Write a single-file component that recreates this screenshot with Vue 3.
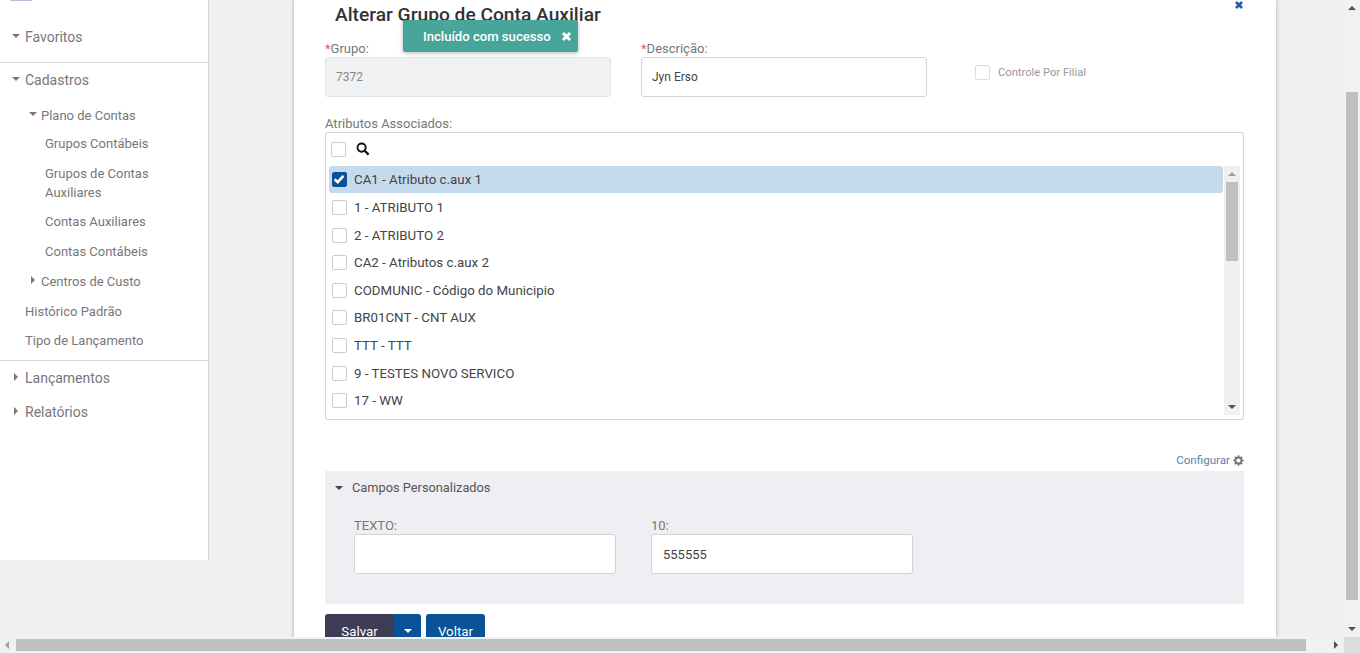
<script setup>
const attrs = [
  { label: "CA1 - Atributo c.aux 1", on: true },
  { label: "1 - ATRIBUTO 1" },
  { label: "2 - ATRIBUTO 2" },
  { label: "CA2 - Atributos c.aux 2" },
  { label: "CODMUNIC - Código do Municipio" },
  { label: "BR01CNT - CNT AUX" },
  { label: "TTT - TTT" },
  { label: "9 - TESTES NOVO SERVICO" },
  { label: "17 - WW" }
]
</script>

<template>
  <div class="page">
    <aside class="sidebar">
      <div class="logo-edge"></div>
      <div class="menu-group first">
        <div class="top-item h50"><span class="tri down"></span>Favoritos</div>
      </div>
      <div class="menu-group second">
        <div class="top-item"><span class="tri down"></span>Cadastros</div>
        <div class="sub-item head"><span class="tri down small"></span>Plano de Contas</div>
        <div class="leaf">Grupos Contábeis</div>
        <div class="leaf two">Grupos de Contas<br />Auxiliares</div>
        <div class="leaf">Contas Auxiliares</div>
        <div class="leaf">Contas Contábeis</div>
        <div class="sub-item"><span class="tri right small"></span>Centros de Custo</div>
        <div class="plain">Histórico Padrão</div>
        <div class="plain last">Tipo de Lançamento</div>
      </div>
      <div class="menu-group third">
        <div class="top-item"><span class="tri right"></span>Lançamentos</div>
        <div class="top-item"><span class="tri right"></span>Relatórios</div>
      </div>
    </aside>

    <main class="modal">
      <div class="title-row">
        <h1>Alterar Grupo de Conta Auxiliar</h1>
        <svg class="close" viewBox="0 0 10 10" width="10" height="10">
          <path d="M2 2 8 8M8 2 2 8" stroke="#1f5ca6" stroke-width="2.6" fill="none" />
        </svg>
      </div>

      <div class="toast">
        <span>Incluído com sucesso</span>
        <svg viewBox="0 0 10 10" width="11" height="11">
          <path d="M1.8 1.8 8.2 8.2M8.2 1.8 1.8 8.2" stroke="#fff" stroke-width="2.7" fill="none" />
        </svg>
      </div>

      <div class="form-row">
        <div class="field">
          <label><i>*</i>Grupo:</label>
          <div class="input disabled">7372</div>
        </div>
        <div class="field">
          <label><i>*</i>Descrição:</label>
          <div class="input">Jyn Erso</div>
        </div>
        <div class="filial">
          <span class="check light"></span>
          <span>Controle Por Filial</span>
        </div>
      </div>

      <div class="assoc-label">Atributos Associados:</div>
      <div class="assoc">
        <div class="assoc-head">
          <span class="check"></span>
          <svg viewBox="0 0 14 14" width="14" height="14">
            <circle cx="5.6" cy="5.6" r="4.1" fill="none" stroke="#111" stroke-width="1.9" />
            <path d="M8.7 8.7 12.6 12.6" stroke="#111" stroke-width="2.3" />
          </svg>
        </div>
        <div class="assoc-body">
          <ul class="attr-list">
            <li v-for="a in attrs" :key="a.label" :class="{ selected: a.on }">
              <span class="check" :class="{ checked: a.on }">
                <svg v-if="a.on" viewBox="0 0 14 14" width="14" height="14">
                  <path d="M2.6 7.2 5.7 10.2 11.4 3.8" fill="none" stroke="#fff" stroke-width="2.6" />
                </svg>
              </span>
              {{ a.label }}
            </li>
          </ul>
          <div class="list-scroll">
            <span class="arrow up grey"></span>
            <div class="list-thumb"></div>
            <span class="arrow down-a dark"></span>
          </div>
        </div>
      </div>

      <div class="config">
        Configurar
        <svg viewBox="0 0 12 12" width="11" height="11">
          <circle cx="6" cy="6" r="3.4" fill="none" stroke="#6f7784" stroke-width="2.2" />
          <path d="M6 .4V2.4M6 9.6V11.6M.4 6H2.4M9.6 6H11.6M2 2 3.4 3.4M8.6 8.6 10 10M10 2 8.6 3.4M3.4 8.6 2 10" stroke="#6f7784" stroke-width="1.7" />
        </svg>
      </div>

      <section class="custom">
        <div class="custom-head"><span class="tri down dark"></span>Campos Personalizados</div>
        <div class="custom-row">
          <div class="field wide">
            <label>TEXTO:</label>
            <div class="input"></div>
          </div>
          <div class="field wide">
            <label>10:</label>
            <div class="input mono">555555</div>
          </div>
        </div>
      </section>

      <div class="actions">
        <button class="btn save">Salvar</button>
        <button class="btn caret"><span class="tri down white"></span></button>
        <button class="btn back">Voltar</button>
      </div>
    </main>

    <!-- barras de rolagem da janela -->
    <div class="vbar">
      <span class="arrow up dark"></span>
      <div class="vthumb"></div>
      <span class="arrow down-a dark"></span>
    </div>
    <div class="hbar">
      <span class="arrow left-a grey"></span>
      <div class="hthumb"></div>
      <span class="arrow right-a dark"></span>
    </div>
    <div class="corner"></div>
  </div>
</template>

<style>
html,
body {
  margin: 0;
  overflow: hidden;
}
</style>

<style scoped>
.page {
  position: relative;
  display: flex;
  align-items: flex-start;
  width: 1360px;
  height: 653px;
  overflow: hidden;
  background: #f0f0f2;
  font-family: Roboto, "Liberation Sans", sans-serif;
  color: #444;
}

/* menu lateral */
.sidebar {
  position: relative;
  flex: none;
  width: 208px;
  height: 560px;
  background: #fff;
  border-right: 1px solid #d6d6d6;
  color: #777;
}

.logo-edge {
  position: absolute;
  left: 10px;
  top: 0;
  width: 22px;
  height: 1px;
  background: #b9bde0;
}

.menu-group.first {
  padding-top: 12px;
  border-bottom: 1px solid #d8d8d8;
}

.menu-group.second {
  padding-bottom: 5px;
  border-bottom: 1px solid #d8d8d8;
}

.top-item {
  display: flex;
  align-items: center;
  height: 34px;
  font-size: 14px;
  padding-left: 12px;
}

.top-item.h50 {
  height: 50px;
}

.tri {
  display: inline-block;
  width: 0;
  height: 0;
  margin-right: 5px;
}

.tri.down {
  border-left: 4px solid transparent;
  border-right: 4px solid transparent;
  border-top: 4px solid #777;
  margin-top: -2px;
}

.tri.right {
  margin-left: 2px;
  margin-right: 7px;
  border-top: 4px solid transparent;
  border-bottom: 4px solid transparent;
  border-left: 4px solid #777;
  margin-top: -2px;
}

.tri.down.small {
  margin-right: 4px;
}

.tri.right.small {
  margin-right: 6px;
}

.tri.dark {
  border-top-color: #444;
  margin-right: 9px;
  margin-top: 0;
}

.tri.white {
  border-top-color: #fff;
  margin: 0;
}

.sub-item {
  display: flex;
  align-items: center;
  height: 30px;
  padding-left: 29px;
  font-size: 13px;
}

.sub-item.head {
  box-sizing: border-box;
  height: 31px;
  padding-top: 5px;
}

.leaf {
  display: flex;
  align-items: center;
  height: 30px;
  padding-left: 45px;
  font-size: 13px;
  line-height: 19px;
}

.leaf.two {
  display: block;
  box-sizing: border-box;
  height: 48px;
  padding-top: 6px;
}

.plain {
  display: flex;
  align-items: center;
  height: 30px;
  padding-left: 25px;
  font-size: 13px;
}

.plain.last {
  height: 29px;
}

/* janela */
.modal {
  position: relative;
  flex: none;
  box-sizing: border-box;
  width: 982px;
  height: 653px;
  margin-left: 85px;
  padding: 0 32px 0 31px;
  background: #fff;
  box-shadow: 0 0 4px rgba(0, 0, 0, 0.3);
}

.title-row {
  display: flex;
  align-items: flex-start;
  justify-content: space-between;
  height: 41px;
  padding-left: 10px;
}

.title-row h1 {
  margin: 0;
  font-size: 19.2px;
  line-height: 30px;
  font-weight: 500;
  color: #333;
}

.toast {
  position: absolute;
  left: 109px;
  top: 20px;
  display: flex;
  align-items: center;
  gap: 10px;
  box-sizing: border-box;
  width: 175px;
  height: 32px;
  padding-left: 20px;
  background: #47a599;
  border-radius: 2px;
  box-shadow: 0 1px 4px rgba(0, 0, 0, 0.3);
  color: #fff;
  font-size: 13.1px;
  font-weight: 500;
}

.form-row {
  display: flex;
  gap: 30px;
}

.field {
  width: 286px;
}

.field label {
  display: block;
  font-size: 13px;
  line-height: 16px;
  color: #777;
}

.field label i {
  font-style: normal;
  color: #d9694f;
}

.input {
  box-sizing: border-box;
  display: flex;
  align-items: center;
  height: 40px;
  padding: 0 10px;
  background: #fff;
  border: 1px solid #d4d4d4;
  border-radius: 3px;
  font-size: 12px;
  color: #444;
}

.input.disabled {
  background: #f0f1f3;
  border-color: #e3e4e6;
  color: #888;
}

.input.mono {
  padding: 0 11px;
  font-size: 13px;
}

.filial {
  display: flex;
  align-items: center;
  gap: 8px;
  height: 30px;
  margin: 16px 0 0 18px;
  font-size: 11.2px;
  color: #999;
}

.check {
  flex: none;
  box-sizing: border-box;
  display: inline-block;
  width: 15px;
  height: 15px;
  background: #fff;
  border: 1px solid #ccc;
  border-radius: 2px;
}

.check.light {
  border-color: #ddd;
}

.check.checked {
  background: #0a5296;
  border-color: #0a5296;
}

.check svg {
  display: block;
  margin: -1px;
}

.assoc-label {
  margin-top: 19px;
  font-size: 13px;
  line-height: 16px;
  color: #777;
}

.assoc {
  box-sizing: border-box;
  height: 288px;
  border: 1px solid #d4d4d4;
  border-radius: 2px;
}

.assoc-head {
  display: flex;
  align-items: center;
  gap: 10px;
  height: 33px;
  padding-left: 5px;
}

.assoc-head svg {
  margin-top: -2px;
}

.assoc-body {
  display: flex;
  padding-left: 3px;
}

.attr-list {
  flex: 1;
  margin: 0;
  padding: 0;
  list-style: none;
}

.attr-list li {
  display: flex;
  align-items: center;
  gap: 7px;
  height: 27.6px;
  padding-left: 3px;
  font-size: 13.3px;
  color: #444;
}

.attr-list li.selected {
  height: 27px;
  margin-bottom: 0.8px;
  background: #c6daee;
  border-radius: 3px;
}

.list-scroll {
  position: relative;
  flex: none;
  width: 16px;
  height: 249px;
  margin: 0 3px 0 1px;
  background: #f0f0f0;
}

.list-thumb {
  position: absolute;
  left: 2px;
  top: 16px;
  width: 12px;
  height: 79px;
  background: #c0c0c0;
}

.arrow {
  position: absolute;
  width: 0;
  height: 0;
}

.arrow.up {
  left: 4px;
  top: 6px;
  border-left: 4px solid transparent;
  border-right: 4px solid transparent;
  border-bottom: 4px solid #505050;
}

.arrow.down-a {
  left: 4px;
  bottom: 6px;
  border-left: 4px solid transparent;
  border-right: 4px solid transparent;
  border-top: 4px solid #505050;
}

.arrow.left-a {
  left: 5px;
  top: 4px;
  border-top: 4px solid transparent;
  border-bottom: 4px solid transparent;
  border-right: 4px solid #a0a0a0;
}

.arrow.right-a {
  right: 22px;
  top: 4px;
  border-top: 4px solid transparent;
  border-bottom: 4px solid transparent;
  border-left: 4px solid #505050;
}

.arrow.up.grey {
  border-bottom-color: #a0a0a0;
}

.config {
  display: flex;
  align-items: center;
  justify-content: flex-end;
  gap: 3px;
  height: 51px;
  padding-top: 29px;
  box-sizing: border-box;
  font-size: 11.6px;
  color: #5f7fa8;
}

.custom {
  box-sizing: border-box;
  height: 133px;
  padding: 0 0 0 10px;
  background: #eeeef3;
}

.custom-head {
  display: flex;
  align-items: center;
  height: 33px;
  font-size: 12.8px;
  color: #555;
}

.custom-row {
  display: flex;
  gap: 35px;
  padding: 13px 0 0 19px;
}

.field.wide {
  width: 262px;
}

.field.wide label {
  line-height: 17px;
}

.actions {
  display: flex;
  margin-top: 10px;
}

.btn {
  height: 40px;
  padding: 0;
  border: none;
  border-radius: 3px 3px 0 0;
  background: #0a5296;
  color: #fff;
  font-family: inherit;
  font-size: 13.3px;
}

.btn.save {
  width: 69px;
  padding-bottom: 5px;
  background: #3c3c54;
  border-radius: 3px 0 0 0;
}

.btn.caret {
  display: flex;
  align-items: flex-start;
  justify-content: center;
  width: 27px;
  padding-top: 15px;
  border-radius: 0 3px 0 0;
}

.btn.back {
  width: 59px;
  margin-left: 5px;
  padding-bottom: 6px;
}

/* barras de rolagem */
.vbar {
  position: absolute;
  right: 0;
  top: 0;
  width: 16px;
  height: 637px;
  background: #f1f1f1;
}

.vthumb {
  position: absolute;
  left: 2px;
  top: 92px;
  width: 12px;
  height: 508px;
  background: #c0c0c0;
}

.hbar {
  position: absolute;
  left: 0;
  bottom: 0;
  width: 1360px;
  height: 16px;
  background: #f1f1f1;
}

.hthumb {
  position: absolute;
  left: 16px;
  top: 2px;
  width: 1290px;
  height: 12px;
  background: #c0c0c0;
}

.corner {
  position: absolute;
  right: 0;
  bottom: 0;
  width: 16px;
  height: 16px;
  background: #dcdcdc;
}
</style>
